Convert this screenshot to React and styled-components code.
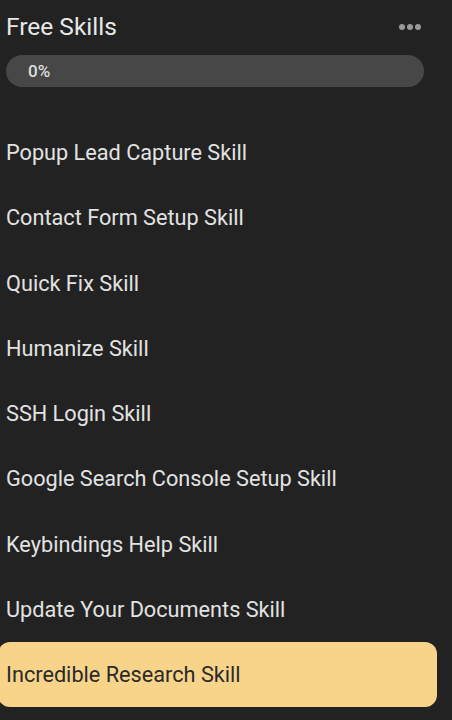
import React from 'react'
import styled, { createGlobalStyle } from 'styled-components'

const skills = [
  'Popup Lead Capture Skill',
  'Contact Form Setup Skill',
  'Quick Fix Skill',
  'Humanize Skill',
  'SSH Login Skill',
  'Google Search Console Setup Skill',
  'Keybindings Help Skill',
  'Update Your Documents Skill',
  'Incredible Research Skill',
]

const Global = createGlobalStyle`
  html, body {
    margin: 0;
    background: #222222;
    font-family: Roboto, "Noto Sans", sans-serif;
    overflow: hidden;
  }
`

const App = () => (
  <>
    <Global />
    <Panel>
      <Header>
        <Title>Free Skills</Title>
        <Dots>
          <Dot />
          <Dot />
          <Dot />
        </Dots>
      </Header>
      <Progress>
        <Percent>0%</Percent>
      </Progress>
      <List>
        {skills.map((s, i) => (
          <Item key={s} active={i === skills.length - 1}>
            {s}
          </Item>
        ))}
      </List>
    </Panel>
  </>
)

export default App

const Panel = styled.div`
  width: 418px;
  padding: 10px 0 0 6px;
  display: flex;
  flex-direction: column;
`

const Header = styled.div`
  display: flex;
  align-items: center;
  justify-content: space-between;
  height: 34px;
`

const Title = styled.h1`
  margin: 0;
  font-size: 24.5px;
  font-weight: 400;
  color: #e8e8e8;
  line-height: 34px;
`

const Dots = styled.div`
  display: flex;
  gap: 2px;
  margin-right: 3px;
`

const Dot = styled.span`
  width: 6px;
  height: 6px;
  border-radius: 50%;
  background: #9a9a9a;
`

const Progress = styled.div`
  margin-top: 11px;
  height: 32px;
  border-radius: 16px;
  background: #474747;
  display: flex;
  align-items: center;
  padding-left: 22px;
`

const Percent = styled.span`
  font-size: 17px;
  font-weight: 500;
  color: #dedede;
`

const List = styled.div`
  margin-top: 33px;
  display: flex;
  flex-direction: column;
`

const Item = styled.div`
  height: 65.25px;
  display: flex;
  align-items: center;
  margin: 0 -13px 0 -8px;
  padding-left: 8px;
  border-radius: 12px;
  font-size: 21.7px;
  color: ${(p) => (p.active ? '#2a2a2a' : '#e2e2e2')};
  background: ${(p) => (p.active ? '#f7d48a' : 'transparent')};
`
